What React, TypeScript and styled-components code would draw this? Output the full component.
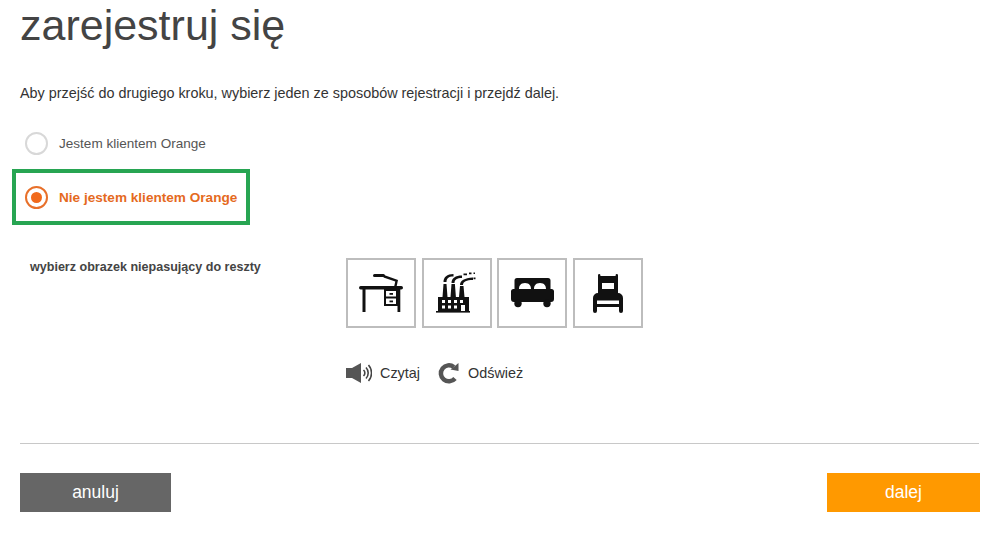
import React from "react";
import styled, { createGlobalStyle } from "styled-components";

const Global = createGlobalStyle`
  html, body { margin: 0; padding: 0; background: #fff; }
  body { font-family: "Liberation Sans", Arial, sans-serif; color: #404040; }
`;

const Page = styled.div`
  width: 999px;
  height: 535px;
  box-sizing: border-box;
  padding: 0 20px;
  display: flex;
  flex-direction: column;
  overflow: hidden;
`;

const Title = styled.h1`
  margin: 0;
  height: 51px;
  font-size: 43px;
  line-height: 51px;
  font-weight: 400;
  color: #444;
`;

const Intro = styled.p`
  margin: 33px 0 0;
  font-size: 14.4px;
  line-height: 18px;
  color: #333;
`;

const Options = styled.div`
  margin: 20px 0 0 -8px;
  display: flex;
  flex-direction: column;
  gap: 5px;
  align-items: flex-start;
`;

const OptionRow = styled.div<{ $highlight?: boolean }>`
  display: flex;
  align-items: center;
  gap: 11px;
  box-sizing: border-box;
  height: ${(p) => (p.$highlight ? "56px" : "42px")};
  width: 238px;
  padding-left: ${(p) => (p.$highlight ? "9px" : "13px")};
  border: ${(p) => (p.$highlight ? "4px solid #27a552" : "none")};
`;

const Radio = styled.span<{ $on?: boolean }>`
  box-sizing: border-box;
  width: 23px;
  height: 23px;
  border-radius: 50%;
  border: 2px solid ${(p) => (p.$on ? "#e8702a" : "#d8d8d8")};
  display: flex;
  align-items: center;
  justify-content: center;
  flex: none;
`;

const RadioDot = styled.span`
  width: 11px;
  height: 11px;
  border-radius: 50%;
  background: #f16a1c;
`;

const OptionLabel = styled.span<{ $on?: boolean }>`
  font-size: ${(p) => (p.$on ? "13.6px" : "13.55px")};
  white-space: nowrap;
  font-weight: ${(p) => (p.$on ? 700 : 400)};
  color: ${(p) => (p.$on ? "#e56a1e" : "#555")};
`;

const Captcha = styled.div`
  margin: 33px 0 0 10px;
  display: flex;
`;

const CaptchaLabel = styled.div`
  width: 316px;
  font-size: 12.55px;
  line-height: 18px;
  font-weight: 700;
  color: #444;
`;

const CaptchaBody = styled.div`
  display: flex;
  flex-direction: column;
`;

const Tiles = styled.div`
  display: flex;
  gap: 5.67px;
`;

const Tile = styled.div`
  box-sizing: border-box;
  width: 70px;
  height: 70px;
  border: 2px solid #bdbdbd;
  display: flex;
  align-items: center;
  justify-content: center;
`;

const Actions = styled.div`
  margin-top: 32px;
  display: flex;
  align-items: center;
  height: 26px;
`;

const Action = styled.span`
  display: flex;
  align-items: center;
  gap: 8px;
  font-size: 14.4px;
  color: #333;
  margin-right: 18px;
`;

const Divider = styled.hr`
  margin: 57px 0 0;
  border: 0;
  border-top: 1px solid #c8c8c8;
`;

const Footer = styled.div`
  margin: 29px -1px 0 0;
  display: flex;
  justify-content: space-between;
`;

const Button = styled.button<{ $primary?: boolean }>`
  width: ${(p) => (p.$primary ? "153px" : "151px")};
  height: 39px;
  border: 0;
  padding: 0;
  font: 400 17.5px "Liberation Sans", Arial, sans-serif;
  color: #fff;
  background: ${(p) => (p.$primary ? "#ff9900" : "#666")};
`;

const DeskIcon = () => (
  <svg width="44" height="38" viewBox="0 0 44 38" fill="#111">
    <rect x="14" y="0" width="12" height="3" rx="1.500" />
    <path d="M25 1l14 5-1.500 7h-2.500l1.300-5.500L24.500 3.500z" />
    <rect x="0" y="12" width="44" height="3.400" rx="1.700" />
    <rect x="3.500" y="15" width="3" height="23" />
    <rect x="38.500" y="15" width="2.800" height="23" />
    <path fillRule="evenodd" d="M25 15h14v17H25zM27 17v5.500h10V17zM27 24.500V30h10v-5.500z" />
    <rect x="30.500" y="19" width="3.500" height="1.800" />
    <rect x="30.500" y="26.500" width="3.500" height="1.800" />
  </svg>
);

const FactoryIcon = () => (
  <svg width="42" height="42" viewBox="0 0 42 42" fill="#111">
    <path fillRule="evenodd" d="M2 25h31v14H2zM6 28h3v3H6zM12 28h3v3h-3zM18 28h3v3h-3zM24 28h3v3h-3zM6 33.500h3v3H6zM12 33.500h3v3h-3zM18 33.500h3v3h-3zM25 33h4v6h-4z" />
    <path d="M6.500 25l1-13h3l1 13zM14.500 25l1-13h3.400l1 13zM23 25l1-11h3.500l1 11z" />
    <rect x="0" y="39" width="34" height="1.600" />
    <path d="M7.500 10c0-5 3.500-8 10-8v2.400c-5 0-7 2-7 5.600zM15.500 11c0-5 4-7.500 10.500-7.500v2.400c-5 0-7.500 1.600-7.500 5.100zM24 13c0-4.500 4.500-7 13-7.500v2.400c-6.500 0-10 1.600-10 5.100z" />
    <path d="M27.500 1.500h3.500v1.800h-3.500zM33 .500h2.500v1.800H33zM37.500 .5H39v1.500h-1.500zM37.500 5.500h2v1.800h-2z" />
  </svg>
);

const BedIcon = () => (
  <svg width="43" height="30" viewBox="0 0 43 30" fill="#111">
    <path fillRule="evenodd" d="M6 0h31a2.500 2.500 0 0 1 2.500 2.500V11h-36V2.500A2.500 2.500 0 0 1 6 0zM8 11h12c0-3-1.500-6-6-6s-6 3-6 6zM23 11h12c0-3-1.500-6-6-6s-6 3-6 6z" />
    <path d="M2.500 11h38a2.500 2.500 0 0 1 2.500 2.500V21a3 3 0 0 1-3 3H3a3 3 0 0 1-3-3v-7.500A2.500 2.500 0 0 1 2.500 11z" />
    <circle cx="7" cy="25.500" r="3.700" />
    <circle cx="36" cy="25.500" r="3.700" />
  </svg>
);

const ChairIcon = () => (
  <svg width="30" height="39" viewBox="0 0 30 39" fill="#111">
    <path fillRule="evenodd" d="M5 1.200a1.200 1.200 0 0 1 2.400 0V2h15.200v-.8a1.200 1.200 0 0 1 2.400 0V26H5zM9 9v6h12V9z" />
    <path fillRule="evenodd" d="M5 19h20a5 5 0 0 1 5 5v13a2 2 0 0 1-4 0v-4H4v4a2 2 0 0 1-4 0V24a5 5 0 0 1 5-5zM4 26.500V30h22v-3.500z" />
  </svg>
);

const SpeakerIcon = () => (
  <svg width="26" height="20" viewBox="0 0 26 20">
    <path d="M0 5h6l9-5v20l-9-5H0z" fill="#555" />
    <path d="M17.500 7a4 4 0 0 1 0 6M20 4.500a8 8 0 0 1 0 11M22.500 2a12 12 0 0 1 0 16" fill="none" stroke="#444" strokeWidth="1.600" />
  </svg>
);

const RefreshIcon = () => (
  <svg width="22" height="22" viewBox="0 0 22 22">
    <path d="M17 16.500A8 8 0 1 1 15.800 5" fill="none" stroke="#555" strokeWidth="4.500" />
    <path d="M12.500 7.500L20.500 9V1z" fill="#555" />
  </svg>
);

export default function App() {
  return (
    <Page>
      <Global />
      <Title>zarejestruj się</Title>
      <Intro>Aby przejść do drugiego kroku, wybierz jeden ze sposobów rejestracji i przejdź dalej.</Intro>
      <Options>
        <OptionRow>
          <Radio />
          <OptionLabel>Jestem klientem Orange</OptionLabel>
        </OptionRow>
        <OptionRow $highlight>
          <Radio $on>
            <RadioDot />
          </Radio>
          <OptionLabel $on>Nie jestem klientem Orange</OptionLabel>
        </OptionRow>
      </Options>
      <Captcha>
        <CaptchaLabel>wybierz obrazek niepasujący do reszty</CaptchaLabel>
        <CaptchaBody>
          <Tiles>
            <Tile><DeskIcon /></Tile>
            <Tile><FactoryIcon /></Tile>
            <Tile><BedIcon /></Tile>
            <Tile><ChairIcon /></Tile>
          </Tiles>
          <Actions>
            <Action><SpeakerIcon />Czytaj</Action>
            <Action><RefreshIcon />Odśwież</Action>
          </Actions>
        </CaptchaBody>
      </Captcha>
      <Divider />
      <Footer>
        <Button>anuluj</Button>
        <Button $primary>dalej</Button>
      </Footer>
    </Page>
  );
}
